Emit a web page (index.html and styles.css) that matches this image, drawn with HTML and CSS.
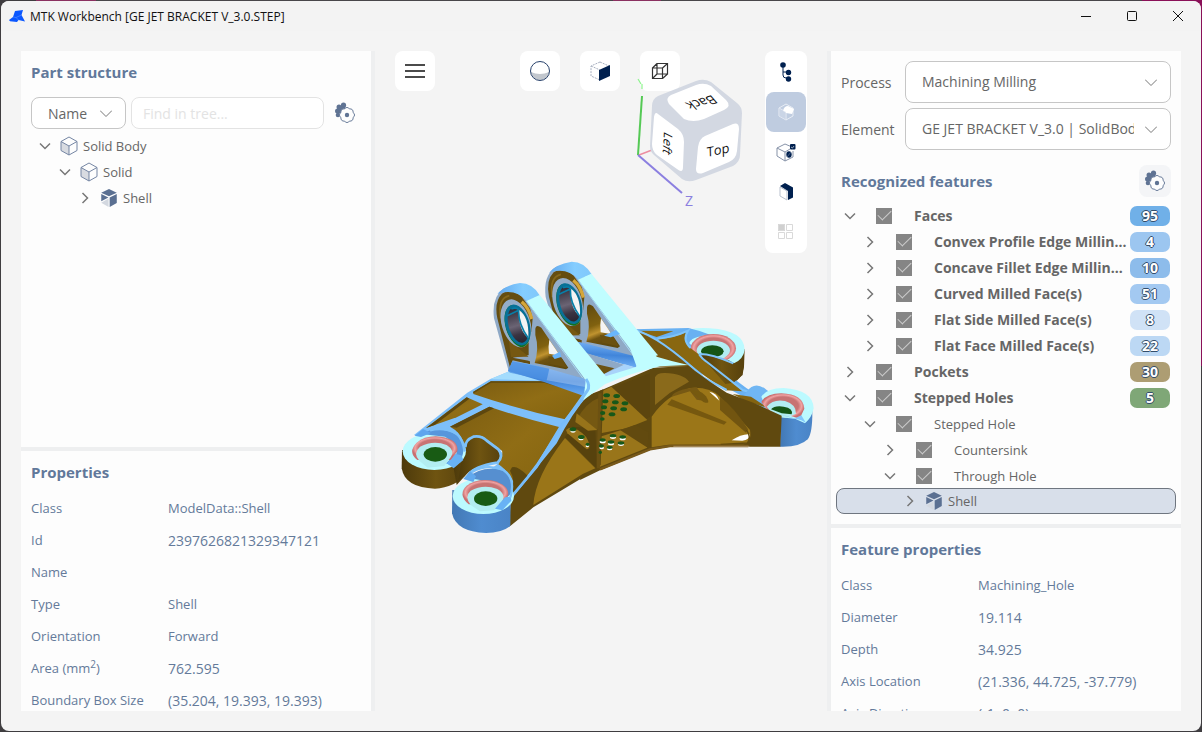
FILE: index.html
```html
<!DOCTYPE html>
<html lang="en">
<head>
<meta charset="utf-8">
<title>MTK Workbench [GE JET BRACKET V_3.0.STEP]</title>
<link rel="stylesheet" href="styles.css">
</head>
<body>
<svg class="symbols" aria-hidden="true">
  <symbol id="down" viewBox="0 0 12 12"><path d="M1 3.500l5 5 5-5" fill="none" stroke="currentColor" stroke-width="1.500"/></symbol>
  <symbol id="right" viewBox="0 0 12 12"><path d="M3.500 1l5 5-5 5" fill="none" stroke="currentColor" stroke-width="1.500"/></symbol>
  <symbol id="thin-down" viewBox="0 0 12 12"><path d="M0 3.500l6 6 6-6" fill="none" stroke="currentColor" stroke-width="1"/></symbol>
  <symbol id="solid" viewBox="0 0 18 20"><path d="M1 5.500v9l8 4.500v-9z" fill="#d8dbe1"/><path d="M9 1l8 4.500v9L9 19l-8-4.500v-9zM1 5.500L9 10l8-4.500M9 10v9" fill="none" stroke="#7485a3" stroke-width="1"/></symbol>
  <symbol id="shell" viewBox="0 0 16 18"><path d="M8 1l7 3.200L8 7.500 1 4.200z" fill="#5b7092"/><path d="M8.600 8.500l6.400-3v8L8.600 17z" fill="#5b7092"/><path d="M1 5.500l6.500 3L1 12z" fill="#5b7092"/><path d="M7.600 9.500V17L1 13.200z" fill="#d3d8e0"/></symbol>
  <symbol id="gears" viewBox="0 0 22 22">
    <g fill="#5f7393"><circle cx="9.500" cy="3.200" r="2.600"/><circle cx="5" cy="5" r="2.500"/><circle cx="3.500" cy="9" r="2.500"/><circle cx="4" cy="13" r="2.300"/><circle cx="8" cy="8" r="4"/></g>
    <path d="M19 10.500a2.800 2.800 0 0 1 0 5 2.800 2.800 0 0 1-3.500 3.500 2.800 2.800 0 0 1-5 0A2.800 2.800 0 0 1 7 15.500a2.800 2.800 0 0 1 0-5A2.800 2.800 0 0 1 10.500 7a2.800 2.800 0 0 1 5 0 2.800 2.800 0 0 1 3.500 3.500z" fill="#fdfdfd" stroke="#6a7c9a"/>
    <circle cx="13" cy="13" r="2.200" fill="#5f7393"/>
  </symbol>
</svg>
<div class="window">
  <header class="titlebar">
    <svg class="logo" viewBox="0 0 16 14"><path d="M6 2l8-1-1.500 5 3.500 6.500L9.500 11 8 13l-7-.8L0 11l4-3z" fill="#0b57ff"/><path d="M4 8l3 .5 2.500 2.500M7 8.500L12.500 6" stroke="#5b92ff" stroke-width=".6" fill="none"/></svg>
    <h1>MTK Workbench [GE JET BRACKET V_3.0.STEP]</h1>
    <button class="win" aria-label="Minimize"><svg viewBox="0 0 12 12"><path d="M1 6.500h10" /></svg></button>
    <button class="win" aria-label="Maximize"><svg viewBox="0 0 12 12"><rect x="1.500" y="1.500" width="9" height="9" rx="1"/></svg></button>
    <button class="win" aria-label="Close"><svg viewBox="0 0 12 12"><path d="M1 1l10 10M11 1L1 11"/></svg></button>
  </header>

  <main class="workspace">
    <aside class="side side-left">
      <section class="panel structure">
        <h2>Part structure</h2>
        <div class="search">
          <div class="picker picker-small"><select aria-label="Search by"><option>Name</option></select><svg><use href="#thin-down"/></svg></div>
          <input class="find" type="text" placeholder="Find in tree..." aria-label="Find in tree">
          <button class="gear" aria-label="Tree settings"><svg><use href="#gears"/></svg></button>
        </div>
        <ul class="tree">
          <li class="row l0"><button class="twist" aria-label="Collapse"><svg><use href="#down"/></svg></button><svg class="part"><use href="#solid"/></svg><span>Solid Body</span></li>
          <li class="row l1"><button class="twist" aria-label="Collapse"><svg><use href="#down"/></svg></button><svg class="part"><use href="#solid"/></svg><span>Solid</span></li>
          <li class="row l2"><button class="twist" aria-label="Expand"><svg><use href="#right"/></svg></button><svg class="part"><use href="#shell"/></svg><span>Shell</span></li>
        </ul>
      </section>
      <section class="panel details">
        <h2>Properties</h2>
        <table>
          <tr><th scope="row">Class</th><td>ModelData::Shell</td></tr>
          <tr><th scope="row">Id</th><td class="num">2397626821329347121</td></tr>
          <tr><th scope="row">Name</th><td></td></tr>
          <tr><th scope="row">Type</th><td>Shell</td></tr>
          <tr><th scope="row">Orientation</th><td>Forward</td></tr>
          <tr><th scope="row">Area (mm<sup>2</sup>)</th><td class="num">762.595</td></tr>
          <tr><th scope="row">Boundary Box Size</th><td class="num">(35.204, 19.393, 19.393)</td></tr>
        </table>
      </section>
    </aside>

    <section class="viewport" aria-label="3D view">
      <svg class="scene" viewBox="-45 -597 1356 1980">
        <defs>
          <linearGradient id="bore" x1="0" y1="0" x2="0" y2="1"><stop offset="0" stop-color="#2e2a36"/><stop offset=".5" stop-color="#6b6474"/><stop offset=".75" stop-color="#3a3442"/><stop offset="1" stop-color="#292531"/></linearGradient>
          <linearGradient id="brown" x1="0" y1="0" x2="1" y2="0"><stop offset="0" stop-color="#4d3a0b"/><stop offset=".5" stop-color="#6f5411"/><stop offset="1" stop-color="#57410d"/></linearGradient>
          <linearGradient id="gold" x1="0" y1="0" x2=".3" y2="1"><stop offset="0" stop-color="#5f490f"/><stop offset=".5" stop-color="#80610f"/><stop offset=".68" stop-color="#c0932f"/><stop offset=".8" stop-color="#6f5310"/><stop offset="1" stop-color="#5f490f"/></linearGradient>
          <linearGradient id="blue" x1="0" y1="0" x2="1" y2="0"><stop offset="0" stop-color="#4278b4"/><stop offset=".5" stop-color="#4f8cd0"/><stop offset="1" stop-color="#4a84c6"/></linearGradient>
          <linearGradient id="field" x1="0" y1="0" x2="1" y2="1"><stop offset="0" stop-color="#7c5d11"/><stop offset=".5" stop-color="#906d15"/><stop offset="1" stop-color="#83630f"/></linearGradient>
          <linearGradient id="valley" x1=".45" y1="0" x2=".3" y2="1"><stop offset="0" stop-color="#79b6f8"/><stop offset=".5" stop-color="#4185da"/><stop offset="1" stop-color="#78b8fa"/></linearGradient>
          <linearGradient id="sky" x1="0" y1="0" x2="1" y2="0"><stop offset="0" stop-color="#62a8ee"/><stop offset=".6" stop-color="#84cdff"/><stop offset="1" stop-color="#80c8fb"/></linearGradient>
          <radialGradient id="rose" cx=".5" cy=".5" r=".5"><stop offset=".72" stop-color="#c87373"/><stop offset=".87" stop-color="#f0a3a3"/><stop offset="1" stop-color="#c96f70"/></radialGradient>
          <g id="arm">
            <path d="M86 348L42 190Q34 125 72 100L100 92 140 110 182 150 320 380 300 376 98 326z" fill="#8fa9c6"/>
            <path d="M90 338L52 190Q42 140 66 116 92 98 125 125L150 160 158 190 148 300 98 308 150 318 150 328 98 316z" fill="#654d10"/>
            <path d="M62 190Q52 130 88 122" fill="none" stroke="#86671a" stroke-width="5"/>
            <path d="M125 140q22 18 30 52" fill="none" stroke="#d5a63a" stroke-width="10"/>
            <path d="M93 306L86 255l60 50z" fill="#765811"/>
            <path d="M146 230h18v92l-18-4z" fill="#8fa9c6"/>
            <ellipse cx="108" cy="205" rx="43" ry="74" transform="rotate(-17 108 205)" fill="#95adc8"/>
            <ellipse cx="112" cy="213" rx="35" ry="65" transform="rotate(-17 112 213)" fill="#13721e"/>
            <ellipse cx="113" cy="210" rx="36" ry="63" transform="rotate(-17 113 210)" fill="#087197"/>
            <ellipse cx="114" cy="211" rx="28" ry="54" transform="rotate(-17 114 211)" fill="url(#bore)"/>
            <path d="M116 164Q148 185 145 248 116 228 116 164z" fill="#f4f4f4"/>
            <path d="M82 182l34-16M116 166q-2 40 28 82M94 162q14-6 22 2" fill="none" stroke="#087fa8" stroke-width="5"/>
            <path d="M166 222Q168 206 184 218L265 338 258 343 164 324Q178 280 166 240z" fill="url(#gold)"/>
            <path d="M208 254L240 302 207 296q-3-22 1-42z" fill="#f4f4f4"/>
            <path d="M205 304l42 8 14 26-50-11z" fill="#6a5010"/>
            <path d="M52 118Q70 92 120 84 158 84 180 122L140 138Q110 102 60 114z" fill="url(#sky)"/>
            <path d="M139 138l40-18 200 245-58 15z" fill="#c0fdff"/>
            <path d="M139 138l177 242" stroke="#a6daf4" stroke-width="3"/>
          </g>
        </defs>

        <!-- right wing and rear mounting pads -->
        <g transform="translate(630 150)">
          <path d="M250 140L434 148 432 200Q426 236 400 248L340 240z" fill="url(#brown)"/>
          <path d="M268 88Q300 82 330 85 434 92 434 150 430 178 402 190L385 180 268 150z" fill="#bcfaff"/>
          <path d="M100 88L265 84Q300 92 330 104 270 110 268 130L300 160 310 168 440 265 480 290 530 330 540 350 265 200 150 120z" fill="#69b1f2"/>
          <ellipse cx="340" cy="145" rx="68" ry="43" fill="url(#rose)"/>
          <ellipse cx="340" cy="151" rx="50" ry="29" fill="#b2edf1"/>
          <ellipse cx="337" cy="154" rx="34" ry="18" fill="#155515"/>
          <path d="M115 92l105 2-50 17zM172 118q55-4 92-24-20 30 10 52l24 18 130 110-52-3-60-42z" fill="#896710"/>
          <path d="M110 96q90 20 180 118l-30-14-100 0z" fill="#765811"/>
          <path d="M298 162q35 3 104 28l30 5-4 30-28 23-24 4z" fill="url(#brown)"/>
          <path d="M296 162q35-2 104 28M298 164q8 12 20 20l110 86 28 8M105 90q75 20 205 142l70 38M172 116q50-4 92-24-18 28 8 52" fill="none" stroke="#7fc4fa" stroke-width="6"/>
          <path d="M440 275q25-35 60-5l30 20-30 40-80-28z" fill="#70b6f3"/>
          <path d="M398 282l55 8 52 34-68-20z" fill="#836310"/>
          <path d="M543 340L540 440Q600 442 623 418 638 400 637 330z" fill="url(#blue)"/>
          <path d="M484 290Q500 264 550 264 640 270 641 325 636 352 615 370L585 356 540 352 500 330z" fill="#bcfaff"/>
          <path d="M484 306q15-26 60-26 66 3 69 46l-14 30-34-10-60-10z" fill="url(#rose)"/>
          <path d="M500 320q20-24 55-17 34 10 33 38l-28 13-40-9z" fill="#b2edf1"/>
          <path d="M513 328q10-12 38-8 30 5 24 23l-30-3z" fill="#155515"/>
          <path d="M480 306l54 35 70 20 14 8-14-23-22 10-48-15z" fill="#82c8fc"/>
        </g>

        <!-- side web with lightening pockets -->
        <g transform="translate(630 150)">
          <path d="M0 272L160 203 265 198 330 245 380 278 460 308 545 347 541 440 210 440 150 450 0 511-60 540z" fill="#60490f"/>
          <path d="M5 275L150 220 150 350 80 385 2 400z" fill="#5c450e"/>
          <path d="M2 275l32-15 108 100-62 25-78 15z" fill="#987418"/>
          <path d="M165 232q6-14 30-13 55 2 72 26l-58 34-44 36z" fill="#8a6a1b"/>
          <path d="M155 350Q200 285 270 264 330 260 360 290L450 390Q456 430 430 433L205 434 155 442z" fill="#9b7618"/>
          <path d="M215 290q5-20 75-28l30 42-30-5-20-25z" fill="#775914"/>
          <path d="M215 298l165 68-8 8-170-60z" fill="#76580f"/>
          <path d="M270 270q45 0 55 34 2 8-15 2l-35-30z" fill="#76590f"/>
          <path d="M328 275q22 3 30 27z" fill="#fff"/>
          <path d="M360 290q45 35 84 98l-6 10-78-68z" fill="#725510"/>
          <path d="M395 421q30-20 54-18 0 18-22 19z" fill="#fff"/>
          <path d="M440 390q15 25 2 39l-80 4" fill="none" stroke="#624a0e" stroke-width="4"/>
          <path d="M0 410l102-32 40 65L0 500z" fill="#99751a"/>
          <path d="M60 390l45-15 40 20-2 48z" fill="#624a0f"/>
          <path d="M0 508l150-60 60-10h235" fill="none" stroke="#78591a" stroke-width="7"/>
          <path d="M220 439h228" stroke="#c5ad8c" stroke-width="2"/>
        </g>
        <path d="M590 437L640 418 632 645 580 682 430 772 358 830 362 744 440 650 510 540z" fill="#60490f"/>
        <path d="M430 765Q435 680 525 564L616 655 578 672z" fill="#9a7518"/>
        <path d="M525 562l95 93-4-120-70-5z" fill="#57420d"/>
        <path d="M558 512q30-55 68-68l-2 94q-25 6-64-22z" fill="#755812"/>
        <path d="M560 490l62 50-28 2-38-26z" fill="#97731a"/>
        <path d="M528 540q20-20 60 20 20 35 2 38l-58-48z" fill="#98741a"/>
        <path d="M630 430l-5 225" stroke="#6c5112" stroke-width="10"/>
        <g fill="#fff"><ellipse cx="549" cy="543" rx="8" ry="5"/><ellipse cx="573" cy="566" rx="8" ry="5"/><ellipse cx="592" cy="588" rx="5" ry="4"/><ellipse cx="638" cy="575" rx="9" ry="5"/><ellipse cx="669" cy="562" rx="9" ry="5"/><ellipse cx="698" cy="566" rx="9" ry="5"/><ellipse cx="635" cy="593" rx="7" ry="5"/><ellipse cx="663" cy="581" rx="9" ry="5"/><ellipse cx="693" cy="583" rx="9" ry="5"/><ellipse cx="659" cy="596" rx="8" ry="5"/></g>
        <g fill="#175819"><ellipse cx="549" cy="538" rx="10" ry="6"/><ellipse cx="574" cy="561" rx="10" ry="6"/><ellipse cx="593" cy="583" rx="6" ry="5"/><ellipse cx="650" cy="436" rx="10" ry="6"/><ellipse cx="680" cy="438" rx="10" ry="6"/><ellipse cx="646" cy="454" rx="9" ry="6"/><ellipse cx="676" cy="457" rx="10" ry="6"/><ellipse cx="705" cy="460" rx="10" ry="6"/><ellipse cx="642" cy="472" rx="9" ry="6"/><ellipse cx="671" cy="475" rx="10" ry="6"/><ellipse cx="701" cy="478" rx="10" ry="6"/><ellipse cx="638" cy="489" rx="8" ry="6"/><ellipse cx="666" cy="493" rx="10" ry="6"/><ellipse cx="637" cy="507" rx="7" ry="5"/><ellipse cx="638" cy="570" rx="9" ry="5"/><ellipse cx="669" cy="557" rx="10" ry="5"/><ellipse cx="698" cy="561" rx="10" ry="5"/><ellipse cx="634" cy="588" rx="8" ry="5"/><ellipse cx="663" cy="576" rx="10" ry="5"/><ellipse cx="693" cy="579" rx="10" ry="5"/><ellipse cx="659" cy="592" rx="9" ry="5"/><ellipse cx="631" cy="607" rx="5" ry="5"/></g>

        <!-- left wing -->
        <path d="M36 600L35 655Q45 714 135 716 195 714 230 670L240 600z" fill="url(#brown)"/>
        <path d="M220 580L255 555 290 565 335 610 320 640 250 650 200 705 190 650z" fill="url(#brown)"/>
        <path d="M187 720L186 790Q198 846 288 849 335 849 361 828L362 745z" fill="url(#blue)"/>
        <path d="M72 555L232 428 300 388 362 362 590 400 597 432Q545 490 500 580L362 750 300 660 325 640 340 605 270 555 245 555 220 590z" fill="#7dbffa"/>
        <path d="M300 388l62-26 110 25-10 5z" fill="#a4dcfd"/>
        <path d="M250 425L303 394 465 394 580 430 525 508Q390 480 250 432z" fill="url(#field)"/>
        <path d="M250 428l53-32h160l117 34" fill="none" stroke="#5f490f" stroke-width="4"/>
        <path d="M108 534L230 442l48 21-78 39z" fill="url(#field)"/>
        <path d="M108 534L230 442l8 4-104 79z" fill="#5d470f"/>
        <path d="M180 530L298 470Q400 505 510 532L440 640 366 738 370 695Q350 658 325 643 340 615 336 602L280 560Q255 552 222 580 210 545 180 530z" fill="url(#field)"/>
        <path d="M222 582Q255 552 280 562L330 602Q340 615 322 638 250 645 222 680L205 690z" fill="url(#brown)"/>
        <path d="M180 530l118-60 14 5-112 58z" fill="#5d470f"/>
        <path d="M366 652q15-7 47 25l-50 63q15-50-3-78z" fill="#5e480e"/>
        <path d="M360 745L440 650 515 525 590 430" fill="none" stroke="#78bdfb" stroke-width="8"/>
        <ellipse cx="133" cy="604" rx="95" ry="56" fill="#bcfaff"/>
        <path d="M95 552Q150 522 207 560 228 590 215 625L195 650 168 640 200 610 195 580 165 560z" fill="#5796dc"/>
        <path d="M74 557l25-20 24 12-30 12z" fill="#5ea5ee"/>
        <path d="M170 640l28-28 16 4 6 14-29 25z" fill="#68b2f5"/>
        <path d="M82 630q-30-24-2-52 28-23 72-18 55 8 50 44l-20 26z" fill="url(#rose)"/>
        <path d="M88 632q-20-22 2-42 40-20 80-5 25 16 13 35l-20 28-50 5z" fill="#b2edf1"/>
        <ellipse cx="136" cy="613" rx="35" ry="22" fill="#185b14"/>
        <path d="M120 541Q160 530 200 550 220 570 224 605M226 592Q225 570 250 560 275 556 290 572L325 598Q343 620 322 638 250 650 236 675" fill="none" stroke="#7cc0f9" stroke-width="8"/>
        <ellipse cx="280" cy="738" rx="92" ry="54" fill="#bcfaff"/>
        <path d="M232 683Q280 642 345 663 378 695 365 730L340 750 320 720 270 690z" fill="#568fd0"/>
        <path d="M220 687l20-24 18 16-8 17z" fill="#62a9ee"/>
        <path d="M236 763q-34-30-6-56 28-22 73-16 54 12 52 44l-18 30z" fill="url(#rose)"/>
        <path d="M242 765q-20-25 0-43 38-20 80-5 26 14 15 37l-25 27-42 3z" fill="#b2edf1"/>
        <ellipse cx="287" cy="746" rx="35" ry="22" fill="#185b14"/>
        <path d="M315 776l30-34 17-2 2 12-27 29z" fill="#68b2f5"/>
        <path d="M245 667Q290 640 340 660 378 685 361 742" fill="none" stroke="#7cc0f9" stroke-width="7"/>

        <!-- clevis arms and the ridge joining them -->
        <g transform="translate(425 -49)"><use href="#arm"/></g>
        <g transform="translate(270 15)">
          <path d="M372 242l36-17 12 12-28 10z" fill="#69b5fb"/>
          <path d="M278 258l30 5 162 42q6 28-4 33L305 292z" fill="url(#valley)"/>
          <path d="M300 288l135 42-20 14 45-6-80 40-65-60z" fill="#8fa9c6"/>
          <path d="M325 322l78 18-37 21z" fill="#6c5211"/>
          <path d="M360 363l75-35 34 10-70 32z" fill="#a8d3fa"/>
        </g>
        <use href="#arm" transform="translate(270 15)"/>
        <g transform="translate(270 15)">
          <path d="M216 302l24-12 4 16-20 6z" fill="#69b5fb"/>
          <path d="M97 319l65 10 150 42q14 20 6 54L190 380 84 348z" fill="url(#valley)"/>
          <path d="M97 319l110 22-5 36-112-24-6-5z" fill="#4c90e2" opacity=".7"/>
          <path d="M208 341l104 30q10 12 8 26L200 376z" fill="#a9c9f2" opacity=".5"/>
          <path d="M318 370L370 366 470 335 450 280 510 275 530 305 575 318 625 330 540 334Q440 358 375 388L310 436z" fill="#c0fdff"/>
          <path d="M318 372q14 20 4 35l-18 26" stroke="#7cc0f9" stroke-width="9" fill="none"/>
        </g>
      </svg>

      <div class="tools">
        <button class="tool" aria-label="Menu"><svg viewBox="0 0 20 20"><path d="M0 4h20M0 10h20M0 16h20" stroke="#111" stroke-width="1.500"/></svg></button>
        <div class="display">
          <button class="tool" aria-label="Shading"><svg viewBox="0 0 20 20"><path d="M.8 11q9.200 4 18.400 0a9.300 9.300 0 0 1-18.400 0z" fill="#c2c7ce"/><circle cx="10" cy="10" r="9.500" fill="none" stroke="#27406a"/></svg></button>
          <button class="tool" aria-label="Faces"><svg viewBox="0 0 20 20"><path d="M10 1L1 5v10l9 4M10 1l9 4M1 5l9 4" fill="none" stroke="#a7afbf" stroke-dasharray="2 1"/><path d="M9 9l11-5v11L9 20z" fill="#00204f"/></svg></button>
          <button class="tool" aria-label="Wireframe"><svg viewBox="0 0 20 20"><path d="M2.500 7h10v10.500h-10zM7 2.500h10.500V13H7zM2.500 7L7 2.500M12.500 7l5-4.500M2.500 17.500L7 13M12.500 17.500l5-4.500" fill="none" stroke="#333" stroke-width="1.200"/></svg></button>
        </div>
        <div class="modes">
          <button class="mode" aria-label="Structure"><svg viewBox="0 0 20 20"><path d="M7 2v11q0 3 3 3h3M7 10h6" fill="none" stroke="#00204f"/><circle cx="7" cy="3" r="2.800" fill="#00204f"/><circle cx="12.500" cy="10.500" r="2.700" fill="#00204f"/><circle cx="12.500" cy="17" r="2.700" fill="#00204f"/></svg></button>
          <button class="mode active" aria-label="Faces" aria-pressed="true"><svg viewBox="0 0 20 20"><path d="M3 6l7-4 7 4v8l-7 4-7-4zM3 6l7 4v8" fill="none" stroke="#e8edf5"/><path d="M7 9q1-5 5-5l6 3-2 5-6-1z" fill="#fff"/><path d="M3 6v8l7 4v-8z" fill="#d2dbe9" opacity=".6"/></svg></button>
          <button class="mode" aria-label="Features"><svg viewBox="0 0 20 20"><path d="M1 6l8-4 7 3M1 6l8 4v9l-8-5zM9 19l8-4V9M9 10l5-3" fill="none" stroke="#8793a8"/><rect x="14" y="2" width="5.500" height="5.500" rx="1" fill="#00204f"/><path d="M15 5l1.500 1L18 4" stroke="#fff" stroke-width=".6" fill="none"/><ellipse cx="13" cy="12.500" rx="2.700" ry="3.300" fill="#00204f"/><path d="M11 15l4-5" stroke="#7889a8" stroke-width=".6"/></svg></button>
          <button class="mode" aria-label="Thickness"><svg viewBox="0 0 20 20"><path d="M4 5l7 4v9l-7-4z" fill="#fff" stroke="#b9c1ce"/><path d="M4 4l5-3 8 4.500v10L12 18V9z" fill="#00204f"/></svg></button>
          <button class="mode" aria-label="Grid" disabled><svg viewBox="0 0 20 20"><rect x="2" y="2" width="7" height="7" fill="#d0d0d0"/><path d="M2.500 2.500h6v6h-6zM10.500 2.500h6v6h-6zM2.500 10.500h6v6h-6zM10.500 10.500h6v6h-6z" fill="none" stroke="#d9d9d9"/></svg></button>
        </div>
      </div>

      <svg class="cube" viewBox="630 70 120 140" role="img" aria-label="View orientation">
        <path d="M642 96L638 155" stroke="#55c955" stroke-width="2"/>
        <path d="M638 79l3 5M642 84v5" stroke="#8df58d" stroke-width="1.200"/>
        <path d="M639 155l13-5" stroke="#ec8da0" stroke-width="1.500"/>
        <path d="M638 155l44 38" stroke="#8b7fe0" stroke-width="2"/>
        <path d="M658 96L696 81Q704 78 711 82L737 103Q742 107 742 113L740 155Q740 162 733 166L696 180Q688 183 682 179L654 155Q650 152 650 146L652 106Q652 99 658 96z" fill="#d3d8e2"/>
        <path d="M671 95L696 85Q704 82 711 86L726 100Q732 106 724 110L704 119Q693 123 684 119L669 104Q665 98 671 95z" fill="#fff"/>
        <path d="M658 114L678 129Q684 134 684 142L683 167Q683 174 677 169L657 155Q652 151 652 144L654 117Q655 111 658 114z" fill="#fff"/>
        <path d="M705 136L733 124Q739 122 739 129L737 151Q736 159 729 162L703 173Q696 175 696 169L698 147Q699 139 705 136z" fill="#fff"/>
        <text transform="translate(712 95) rotate(164) skewX(25)" font-size="13">Back</text>
        <text transform="translate(664 131) rotate(93) skewX(-25)" font-size="12">Left</text>
        <text transform="translate(707 157) rotate(-12) skewX(-10)" font-size="13">Top</text>
        <text x="685" y="206" font-size="14" class="axis">Z</text>
      </svg>
    </section>

    <aside class="side side-right">
      <section class="panel features">
        <div class="form">
          <label for="process">Process</label>
          <div class="picker"><select id="process"><option>Machining Milling</option></select><svg><use href="#thin-down"/></svg></div>
          <label for="element">Element</label>
          <div class="picker"><select id="element"><option>GE JET BRACKET V_3.0 | SolidBody</option></select><svg><use href="#thin-down"/></svg></div>
        </div>
        <div class="heading"><h2>Recognized features</h2><button class="gear filled" aria-label="Feature settings"><svg><use href="#gears"/></svg></button></div>
        <ul class="tree">
          <li class="row l0 strong"><button class="twist" aria-label="Collapse"><svg><use href="#down"/></svg></button><input type="checkbox" id="f1" checked><label for="f1">Faces</label><span class="badge b95">95</span></li>
          <li class="row l1 strong"><button class="twist" aria-label="Expand"><svg><use href="#right"/></svg></button><input type="checkbox" id="f2" checked><label for="f2">Convex Profile Edge Millin...</label><span class="badge b4">4</span></li>
          <li class="row l1 strong"><button class="twist" aria-label="Expand"><svg><use href="#right"/></svg></button><input type="checkbox" id="f3" checked><label for="f3">Concave Fillet Edge Millin...</label><span class="badge b10">10</span></li>
          <li class="row l1 strong"><button class="twist" aria-label="Expand"><svg><use href="#right"/></svg></button><input type="checkbox" id="f4" checked><label for="f4">Curved Milled Face(s)</label><span class="badge b51">51</span></li>
          <li class="row l1 strong"><button class="twist" aria-label="Expand"><svg><use href="#right"/></svg></button><input type="checkbox" id="f5" checked><label for="f5">Flat Side Milled Face(s)</label><span class="badge b8">8</span></li>
          <li class="row l1 strong"><button class="twist" aria-label="Expand"><svg><use href="#right"/></svg></button><input type="checkbox" id="f6" checked><label for="f6">Flat Face Milled Face(s)</label><span class="badge b22">22</span></li>
          <li class="row l0 strong"><button class="twist" aria-label="Expand"><svg><use href="#right"/></svg></button><input type="checkbox" id="f7" checked><label for="f7">Pockets</label><span class="badge b30">30</span></li>
          <li class="row l0 strong"><button class="twist" aria-label="Collapse"><svg><use href="#down"/></svg></button><input type="checkbox" id="f8" checked><label for="f8">Stepped Holes</label><span class="badge b5">5</span></li>
          <li class="row l1"><button class="twist" aria-label="Collapse"><svg><use href="#down"/></svg></button><input type="checkbox" id="f9" checked><label for="f9">Stepped Hole</label></li>
          <li class="row l2"><button class="twist" aria-label="Expand"><svg><use href="#right"/></svg></button><input type="checkbox" id="f10" checked><label for="f10">Countersink</label></li>
          <li class="row l2"><button class="twist" aria-label="Collapse"><svg><use href="#down"/></svg></button><input type="checkbox" id="f11" checked><label for="f11">Through Hole</label></li>
          <li class="row l3 selected"><button class="twist" aria-label="Expand"><svg><use href="#right"/></svg></button><svg class="part"><use href="#shell"/></svg><span>Shell</span></li>
        </ul>
      </section>
      <section class="panel details">
        <h2>Feature properties</h2>
        <table>
          <tr><th scope="row">Class</th><td>Machining_Hole</td></tr>
          <tr><th scope="row">Diameter</th><td class="num">19.114</td></tr>
          <tr><th scope="row">Depth</th><td class="num">34.925</td></tr>
          <tr><th scope="row">Axis Location</th><td class="num">(21.336, 44.725, -37.779)</td></tr>
          <tr><th scope="row">Axis Direction</th><td class="num">(-1, 0, 0)</td></tr>
        </table>
      </section>
    </aside>
  </main>
</div>
</body>
</html>
```
FILE: styles.css
```css
* { box-sizing: border-box; }

body {
  margin: 0;
  padding: 1px;
  height: 100vh;
  overflow: hidden;
  display: flex;
  background: #3f3d40;
  background-image: linear-gradient(90deg, #3f3d40 3%, #8a3060 3%, #8a3060 8%, #48464a 8%, #48464a 51%, #8a3060 51%, #8a3060 55%, #48464a 55%, #48464a 95%, #8a1058 95%);
  background-size: 100% 50%;
  background-repeat: no-repeat;
  font-family: "Open Sans", "Noto Sans", sans-serif;
  font-size: 14px;
  color: #666;
}

button, input, select { font: inherit; color: inherit; margin: 0; }
button { padding: 0; border: 0; background: none; display: grid; place-items: center; flex: none; }
svg { display: block; flex: none; }
.symbols { position: absolute; width: 0; height: 0; }

.window { flex: 1; min-width: 0; display: flex; flex-direction: column; background: #f4f4f4; border-radius: 8px; overflow: hidden; }

.titlebar { display: flex; align-items: center; height: 30px; padding-left: 8px; background: #f3f3f3; flex: none; }
.logo { width: 16px; height: 14px; margin-right: 5px; }
.titlebar h1 { flex: 1; margin: 0; font-size: 12px; font-weight: 400; color: #111; }
.win { width: 46px; height: 30px; }
.win svg { width: 12px; height: 12px; fill: none; stroke: #111; stroke-width: 1; }

.workspace { flex: 1; min-height: 0; display: grid; grid-template-columns: 354px minmax(0, 1fr) 354px; padding: 20px; }

.side { display: grid; gap: 4px; min-height: 0; background: #eeeff0; }
.side-left { grid-template-rows: minmax(0, 396fr) minmax(0, 260fr); padding-right: 4px; }
.side-right { grid-template-rows: auto minmax(0, 1fr); padding-left: 4px; }
.panel { background: #fdfdfd; padding: 10px; min-height: 0; overflow: hidden; }
h2 { margin: 0; font-size: 15px; line-height: 22px; font-weight: 700; color: #61789a; }

.search { display: flex; align-items: center; gap: 5px; margin-top: 14px; }
.picker { display: grid; align-items: center; min-width: 0; }
.picker > * { grid-area: 1 / 1; }
.picker select { appearance: none; width: 100%; height: 42px; padding: 0 36px 2px 16px; border: 1px solid #c6c6c6; border-radius: 8px; background: #fff; }
.picker svg { width: 12px; height: 12px; justify-self: end; margin-right: 14px; pointer-events: none; color: #777; }
.picker-small { width: 95px; }
.picker-small select { height: 32px; padding: 0 30px 0 16px; }
.find { flex: 1; min-width: 0; height: 32px; padding: 0 11px; border: 1px solid #e3e3e3; border-radius: 8px; background: #fff; }
.find::placeholder { color: #e3e3e3; opacity: 1; }
.gear { width: 32px; height: 32px; border-radius: 8px; }
.gear svg { width: 22px; height: 22px; }
.filled { background: #f4f5f7; }

.tree { list-style: none; margin: 0; padding: 0; font-size: 13px; }
.row { display: flex; align-items: center; height: 26px; padding-right: 1px; padding-bottom: 1px; }
.structure .tree { margin-top: 4px; }
.l1 { padding-left: 20px; }
.l2 { padding-left: 40px; }
.l3 { padding-left: 60px; }
.twist { width: 18px; height: 18px; color: #777; }
.structure .twist { margin-left: 5px; }
.twist svg { width: 12px; height: 12px; }
.part { width: 18px; height: 20px; margin: 0 5px 0 6px; }
.row label { flex: 1; min-width: 0; white-space: nowrap; }
.strong { font-size: 14px; font-weight: 700; }

.row input { appearance: none; flex: none; display: grid; place-items: center; width: 16px; height: 16px; margin: 0 22px 0 17px; background: #858585; }
.row input:checked::before { content: ""; width: 12px; height: 6px; margin-bottom: 4px; border: solid #ccc; border-width: 0 0 1px 1px; transform: rotate(-45deg); }

.badge { flex: none; width: 40px; border-radius: 7px; line-height: 20px; text-align: center; color: #fff; font-size: 14px; text-shadow: 1px 0 #344e6b, -1px 0 #344e6b, 0 1px #344e6b, 0 -1px #344e6b; }
.b95 { background: #70b0e8; }
.b4 { background: #9cc6f0; }
.b10 { background: #8dbceb; }
.b51 { background: #a3c9f1; }
.b8 { background: #d0e2f6; }
.b22 { background: #bcd8f4; }
.b30 { background: #ad9d73; }
.b5 { background: #7fa777; }

.selected { margin: -1px -5px 0; padding-left: 64px; border: 1px solid #6f7680; border-radius: 8px; background: #d8dfea; }

.form { display: grid; grid-template-columns: 64px minmax(0, 1fr); align-items: center; row-gap: 5px; }
.heading { display: flex; justify-content: space-between; align-items: center; margin: 15px 0 6px; }

.details h2 { margin-bottom: 9px; }
table { border-collapse: collapse; table-layout: fixed; width: 100%; color: #647a9a; font-size: 13px; }
th, td { height: 32px; padding: 0; text-align: left; font-weight: 400; white-space: nowrap; }
th { width: 137px; }
.num { font-size: 14px; }
sup { font-size: 10px; line-height: 0; }

.viewport { display: grid; min-width: 0; min-height: 0; }
.viewport > * { grid-area: 1 / 1; }
.scene { width: 100%; height: 100%; min-height: 0; }
.tools { display: flex; align-items: flex-start; justify-content: space-between; padding: 0 20px; }
.display { display: flex; gap: 20px; }
.tool { width: 40px; height: 40px; border-radius: 8px; background: #fff; }
.tool svg, .mode svg { width: 20px; height: 20px; }
.modes { display: grid; padding: 1px; border-radius: 8px; background: #fff; }
.mode { width: 40px; height: 40px; border-radius: 8px; }
.active { background: #bfcce0; }
.cube { width: 120px; height: 140px; justify-self: end; margin: 19px 77px 0 0; pointer-events: none; }
.cube text { fill: #111; }
.cube .axis { fill: #8b7fe0; }
```
